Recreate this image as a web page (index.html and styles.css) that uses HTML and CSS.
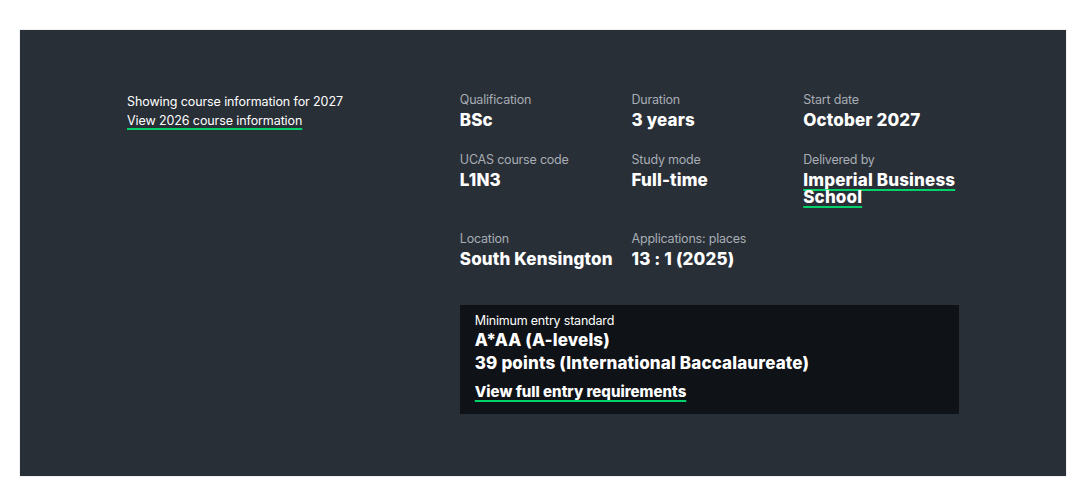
FILE: index.html
```html
<!DOCTYPE html>
<html lang="en">
<head>
<meta charset="utf-8">
<title>Course information</title>
<link rel="stylesheet" href="styles.css">
</head>
<body>
<section class="panel">
  <div class="container">
    <div class="intro">
      <p class="showing">Showing course information for 2027</p>
      <a class="link" href="#">View 2026 course information</a>
    </div>
    <div class="details">
      <dl class="facts">
        <div class="fact"><dt>Qualification</dt><dd>BSc</dd></div>
        <div class="fact"><dt>Duration</dt><dd>3 years</dd></div>
        <div class="fact"><dt>Start date</dt><dd>October 2027</dd></div>
        <div class="fact"><dt>UCAS course code</dt><dd>L1N3</dd></div>
        <div class="fact"><dt>Study mode</dt><dd>Full-time</dd></div>
        <div class="fact"><dt>Delivered by</dt><dd class="multi"><a class="link" href="#">Imperial Business School</a></dd></div>
        <div class="fact"><dt>Location</dt><dd>South Kensington</dd></div>
        <div class="fact"><dt>Applications: places</dt><dd>13 : 1 (2025)</dd></div>
      </dl>
      <div class="entry">
        <p class="entry-label">Minimum entry standard</p>
        <p class="entry-value">A*AA (A-levels)</p>
        <p class="entry-value">39 points (International Baccalaureate)</p>
        <a class="link entry-link" href="#">View full entry requirements</a>
      </div>
    </div>
  </div>
</section>
</body>
</html>
```

FILE: styles.css
```css
* { box-sizing: border-box; }
html, body { margin: 0; padding: 0; background: #ffffff; }
body {
  font-family: Inter, "Noto Sans", "Liberation Sans", sans-serif;
  color: #ffffff;
  padding: 30px 14px 12px 20px;
}
.panel {
  background: #292f37;
  height: 446px;
  padding: 61px 0 0;
  box-shadow: 0 0 1px rgba(0,0,0,0.35);
}
.container {
  width: 832px;
  margin: 0 auto;
  display: flex;
}
.intro {
  width: 40%;
  padding-top: 1px;
  font-size: 12.5px;
  line-height: 19px;
  letter-spacing: -0.1px;
}
.showing { margin: 0; }
.link {
  color: #ffffff;
  text-decoration: underline;
  text-decoration-color: #00d36a;
  text-decoration-thickness: 2px;
  text-underline-offset: 3px;
}
.details { width: 60%; }
.facts {
  margin: 0;
  display: grid;
  grid-template-columns: repeat(3, 1fr);
  column-gap: 16px;
  row-gap: 22px;
}
.fact dt {
  font-size: 12.5px;
  line-height: 18px;
  color: #a7adb4;
  letter-spacing: -0.2px;
}
.fact dd {
  margin: 3px 0 0;
  font-size: 17px;
  line-height: 17px;
  font-weight: 800;
  letter-spacing: 0.15px;
}
.fact dd.multi { padding-bottom: 2px; }
.entry {
  margin-top: 37px;
  background: #0f1216;
  padding: 8px 15px 13px;
}
.entry p { margin: 0; }
.entry-label {
  font-size: 12.5px;
  line-height: 16px;
  letter-spacing: -0.2px;
  color: #ffffff;
}
.entry-value {
  font-size: 17px;
  line-height: 23px;
  font-weight: 800;
  letter-spacing: 0.15px;
}
.entry-link {
  display: inline-block;
  margin-top: 8px;
  font-size: 15px;
  line-height: 18px;
  font-weight: 800;
  letter-spacing: 0;
}
```
